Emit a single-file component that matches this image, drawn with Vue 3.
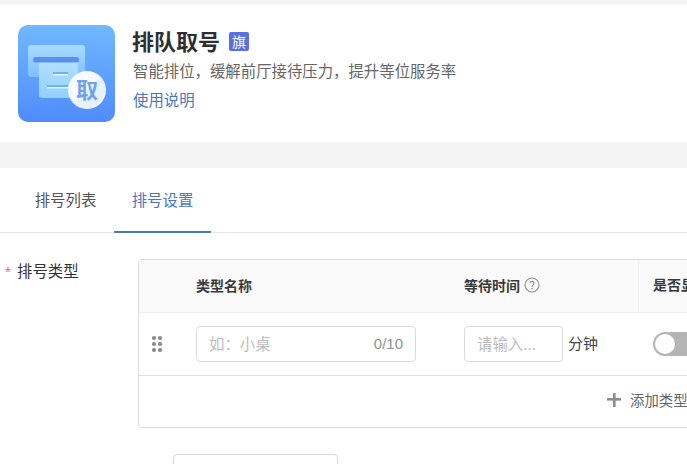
<script setup>
const tabs = [
  { label: '排号列表', active: false },
  { label: '排号设置', active: true }
]
const dots = [0, 1, 2, 3, 4, 5]
</script>

<template>
  <div class="page">
    <header class="hero">
      <svg class="logo" viewBox="0 0 97 97" aria-hidden="true">
        <defs>
          <linearGradient id="bg" x1="0" y1="0" x2="0" y2="1">
            <stop offset="0" stop-color="#70b8ff" />
            <stop offset="1" stop-color="#4f8cfb" />
          </linearGradient>
          <linearGradient id="back" x1="0" y1="0" x2="0" y2="1">
            <stop offset="0" stop-color="#a8dcff" />
            <stop offset="1" stop-color="#7fbdfd" />
          </linearGradient>
          <linearGradient id="sheet" x1="0" y1="0" x2="0" y2="1">
            <stop offset="0" stop-color="#b0e0fd" />
            <stop offset="1" stop-color="#93d0fd" />
          </linearGradient>
        </defs>
        <rect width="97" height="97" rx="10" fill="url(#bg)" />
        <path d="M10 23a3 3 0 0 1 3-3h51a3 3 0 0 1 3 3v29H13a3 3 0 0 1-3-3z" fill="url(#back)" />
        <path d="M21 36h39v34a3 3 0 0 1-3 3H24a3 3 0 0 1-3-3z" fill="url(#sheet)" />
        <rect x="15" y="32" width="46" height="5.500" rx="2.500" fill="#5a90ec" />
        <rect x="35" y="47" width="15" height="2" fill="#73aef0" />
        <rect x="35" y="49" width="15" height="1.500" fill="#dff3ff" />
        <rect x="29" y="60" width="21" height="2" fill="#73aef0" />
        <rect x="29" y="62" width="21" height="1.500" fill="#dff3ff" />
        <circle cx="69" cy="65" r="19" fill="#f7faff" />
        <path d="M82.400 51.600a19 19 0 0 1-26.800 26.800z" fill="#d8e5fb" opacity=".5" />
        <text x="69" y="73" class="logo-char">取</text>
      </svg>
      <div class="intro">
        <div class="title-row">
          <h1 class="title">排队取号</h1>
          <span class="badge">旗</span>
        </div>
        <p class="desc">智能排位，缓解前厅接待压力，提升等位服务率</p>
        <a class="help">使用说明</a>
      </div>
    </header>

    <main class="panel">
      <nav class="tabs">
        <div v-for="tab in tabs" :key="tab.label" class="tab" :class="{ active: tab.active }">{{ tab.label }}</div>
      </nav>

      <section class="form-row">
        <label class="form-label"><i class="star">*</i>排号类型</label>
        <div class="table">
          <div class="thead">
            <div class="cell-drag"></div>
            <div class="th name">类型名称</div>
            <div class="th wait">
              等待时间
              <svg class="q" viewBox="0 0 16 16" aria-hidden="true">
                <circle cx="8" cy="8" r="7" fill="none" stroke="#8c8c8c" stroke-width="1.100" />
                <path d="M6 6.300a2 2 0 1 1 3.200 1.600c-.8.6-1.200.9-1.200 1.800" fill="none" stroke="#8c8c8c" stroke-width="1.100" />
                <circle cx="8" cy="11.600" r=".8" fill="#8c8c8c" />
              </svg>
            </div>
            <div class="th show">是否显示</div>
          </div>
          <div class="tbody">
            <div class="cell-drag">
              <div class="grip"><span v-for="d in dots" :key="d"></span></div>
            </div>
            <div class="name">
              <div class="input name-input"><span>如：小桌</span><em>0/10</em></div>
            </div>
            <div class="wait wait-cell">
              <div class="input wait-input"><span>请输入...</span></div>
              <span class="unit">分钟</span>
            </div>
            <div class="show">
              <div class="switch"><b></b></div>
            </div>
          </div>
          <div class="tfoot">
            <span class="plus"></span>
            <span>添加类型</span>
          </div>
        </div>
      </section>

      <div class="next-row">
        <div class="next-input"></div>
      </div>
    </main>
  </div>
</template>

<style scoped>
.page {
  width: 687px;
  height: 464px;
  overflow: hidden;
  background: #f3f3f4;
  padding-top: 5px;
  box-sizing: border-box;
  font-family: "Noto Sans CJK SC", "Liberation Sans", sans-serif;
  color: #333;
}
.hero {
  height: 137px;
  background: #fff;
  padding: 20px 0 0 18px;
  box-sizing: border-box;
  display: flex;
  gap: 18px;
}
.logo {
  width: 97px;
  height: 97px;
  flex: none;
}
.logo-char {
  font-size: 22px;
  font-weight: 700;
  fill: #6ea3ea;
  text-anchor: middle;
  font-family: "Noto Sans CJK SC", sans-serif;
}
.intro {
  display: flex;
  flex-direction: column;
}
.title-row {
  display: flex;
  align-items: center;
  height: 32px;
  margin: -1px 0 0 -1px;
}
.title {
  margin: 0;
  font-size: 22px;
  line-height: 32px;
  font-weight: 700;
  color: #2f2f2f;
}
.badge {
  width: 20px;
  height: 19px;
  margin: 3px 0 0 9px;
  border-radius: 2px;
  background: #5b6fe0;
  color: #fff;
  font-size: 14px;
  line-height: 19px;
  text-align: center;
}
.desc {
  margin: 3px 0 0;
  font-size: 15.400px;
  line-height: 23px;
  color: #666;
  white-space: nowrap;
}
.help {
  margin-top: 6px;
  font-size: 15.400px;
  line-height: 23px;
  color: #4a76bd;
}
.panel {
  margin-top: 26px;
  background: #fff;
  height: 296px;
  overflow: hidden;
}
.tabs {
  display: flex;
  height: 65px;
  padding-left: 17px;
  border-bottom: 1px solid #e6e6e6;
  box-sizing: border-box;
}
.tab {
  width: 97px;
  text-align: center;
  font-size: 15.400px;
  line-height: 62px;
  height: 65px;
  box-sizing: border-box;
  color: #555;
}
.tab.active {
  color: #4a76bd;
  border-bottom: 2px solid #4a76bd;
  border-radius: 1px;
}
.form-row {
  display: flex;
  padding: 27px 0 0 5px;
  margin-top: -1px;
}
.form-label {
  width: 133px;
  flex: none;
  font-size: 15.400px;
  line-height: 22px;
  color: #333;
}
.star {
  display: inline-block;
  width: 12px;
  color: #d9776f;
  font-style: normal;
  font-family: "Liberation Sans", sans-serif;
}
.table {
  width: 700px;
  flex: none;
  height: 169px;
  box-sizing: border-box;
  border: 1px solid #dcdcdc;
  border-radius: 4px;
  overflow: hidden;
}
.thead, .tbody {
  display: grid;
  grid-template-columns: 57px 268px 175px 1fr;
  align-items: center;
}
.thead {
  height: 52px;
  background: #fafafa;
  border-bottom: 1px solid #eeeeee;
}
.th {
  font-size: 14px;
  font-weight: 700;
  line-height: 20px;
  padding-bottom: 3px;
  color: #3a3a3a;
  white-space: nowrap;
}
.th.wait {
  display: flex;
  align-items: center;
  gap: 4px;
}
.th.show {
  height: 52px;
  line-height: 49px;
  box-sizing: border-box;
  border-left: 1px solid #f0f0f0;
  padding-left: 14px;
  margin-left: -1px;
}
.q {
  width: 16px;
  height: 16px;
}
.tbody {
  height: 63px;
  border-bottom: 1px solid #dedede;
  box-sizing: border-box;
}
.grip {
  width: 9px;
  margin-left: 13px;
  display: grid;
  grid-template-columns: 3.500px 3.500px;
  column-gap: 2.500px;
  row-gap: 2.500px;
}
.grip span {
  width: 3.500px;
  height: 3.500px;
  border-radius: 50%;
  background: #8c8c8c;
}
.input {
  height: 36px;
  box-sizing: border-box;
  border: 1px solid #d9d9d9;
  border-radius: 4px;
  display: flex;
  align-items: center;
  justify-content: space-between;
  padding: 0 12px 3px;
  font-size: 15.400px;
  color: #bdbdbd;
}
.name-input {
  width: 220px;
}
.input em {
  font-style: normal;
  font-size: 15px;
  padding-top: 1px;
  color: #8f8f8f;
  font-family: "Liberation Sans", sans-serif;
}
.wait-cell {
  display: flex;
  align-items: center;
  gap: 5px;
}
.wait-input {
  width: 99px;
  white-space: nowrap;
}
.unit {
  font-size: 15px;
  padding-bottom: 3px;
  color: #444;
}
.show {
  padding-left: 14px;
}
.switch {
  width: 52px;
  height: 24px;
  border-radius: 12px;
  background: #b5b5b5;
  padding: 2px;
  box-sizing: border-box;
}
.switch b {
  display: block;
  width: 20px;
  height: 20px;
  border-radius: 50%;
  background: #fff;
}
.tfoot {
  height: 52px;
  box-sizing: border-box;
  padding: 0 0 5px 468px;
  display: flex;
  align-items: center;
  font-size: 14.400px;
  color: #666;
  gap: 9px;
}
.plus {
  width: 14px;
  height: 14px;
  flex: none;
  background:
    linear-gradient(#8c8c8c, #8c8c8c) center / 14px 2.600px no-repeat,
    linear-gradient(#8c8c8c, #8c8c8c) center / 2.600px 14px no-repeat;
}
.next-row {
  padding: 26px 0 0 173px;
}
.next-input {
  width: 165px;
  height: 40px;
  box-sizing: border-box;
  border: 1px solid #d9d9d9;
  border-radius: 4px;
}
</style>

<style>
html, body { margin: 0; overflow: hidden; }
</style>
